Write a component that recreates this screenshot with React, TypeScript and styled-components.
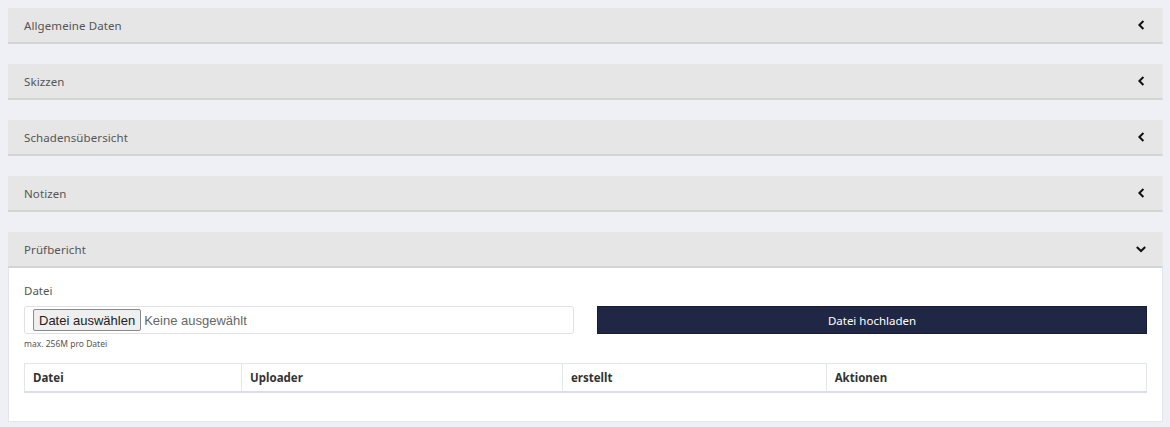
import React from 'react'
import styled, { createGlobalStyle } from 'styled-components'

const GlobalStyle = createGlobalStyle`
  html, body {
    margin: 0;
    padding: 0;
    background: #eff0f6;
    font-family: "Noto Sans", "Open Sans", sans-serif;
  }
`

const Page = styled.div`
  display: flex;
  flex-direction: column;
  gap: 20px;
  padding: 8px 7px 8px 8px;
`

const Panel = styled.section`
  display: flex;
  flex-direction: column;
`

const Header = styled.div`
  display: flex;
  align-items: center;
  justify-content: space-between;
  height: 34px;
  padding: 0 15px 0 16px;
  background: #e6e6e6;
  border-bottom: 2px solid #d4d4d4;
  border-right: 1px solid #e9e9ea;
  color: #555;
  font-size: 11.5px;
  letter-spacing: 0.1px;
`

const Body = styled.div`
  display: flex;
  flex-direction: column;
  padding: 15px 15px 28px 15px;
  background: #fff;
  border: 1px solid #e4e6ee;
  border-top: none;
`

const Label = styled.div`
  color: #555;
  font-size: 11.5px;
  margin-bottom: 8px;
`

const Row = styled.div`
  display: grid;
  grid-template-columns: 1fr 1fr;
  gap: 23px;
`

const FileBox = styled.div`
  display: flex;
  align-items: center;
  gap: 3px;
  height: 26px;
  padding: 0 8px;
  border: 1px solid #dfe1e8;
  border-radius: 3px;
  background: #fff;
  font-family: "Liberation Sans", Arial, sans-serif;
  font-size: 13px;
  color: #666;
`

const ChooseButton = styled.span`
  display: inline-flex;
  align-items: center;
  height: 20px;
  padding: 0 5px;
  background: #efefef;
  border: 1px solid #8a8a8a;
  border-radius: 2px;
  color: #222;
`

const UploadButton = styled.button`
  height: 28px;
  border: 1px solid #161d35;
  background: #1f2744;
  color: #fff;
  font-family: "Noto Sans", "Open Sans", sans-serif;
  font-size: 11.5px;
  cursor: pointer;
`

const Hint = styled.div`
  margin-top: 4px;
  color: #555;
  font-size: 8.5px;
`

const Table = styled.table`
  margin-top: 14px;
  width: 100%;
  border-collapse: collapse;
  table-layout: fixed;
  border: 1px solid #e3e5ec;
  border-bottom: 2px solid #dcdee6;
`

const Col = styled.col<{ pct: number }>`
  width: ${p => p.pct}%;
`

const Th = styled.th`
  height: 27px;
  padding: 0 8px;
  text-align: left;
  font-size: 11.5px;
  font-weight: 700;
  color: #333;
  border-right: 1px solid #e3e5ec;
`

const Chevron = ({ open }: { open?: boolean }) => (
  <svg width="12" height="12" viewBox="0 0 12 12">
    <path
      d={open ? 'M1.8 4 L6 8 L10.2 4' : 'M8.4 2 L4.4 6 L8.4 10'}
      fill="none"
      stroke="#111"
      strokeWidth="2"
    />
  </svg>
)

const closed = ['Allgemeine Daten', 'Skizzen', 'Schadensübersicht', 'Notizen']
const cols = [
  { label: 'Datei', pct: 19.35 },
  { label: 'Uploader', pct: 28.6 },
  { label: 'erstellt', pct: 23.5 },
  { label: 'Aktionen', pct: 28.55 },
]

export default function App() {
  return (
    <>
      <GlobalStyle />
      <Page>
        {closed.map(t => (
          <Panel key={t}>
            <Header>
              {t}
              <Chevron />
            </Header>
          </Panel>
        ))}
        <Panel>
          <Header>
            Prüfbericht
            <Chevron open />
          </Header>
          <Body>
            <Label>Datei</Label>
            <Row>
              <FileBox>
                <ChooseButton>Datei auswählen</ChooseButton>
                Keine ausgewählt
              </FileBox>
              <UploadButton>Datei hochladen</UploadButton>
            </Row>
            <Hint>max. 256M pro Datei</Hint>
            <Table>
              <colgroup>
                {cols.map(c => <Col key={c.label} pct={c.pct} />)}
              </colgroup>
              <thead>
                <tr>
                  {cols.map(c => <Th key={c.label}>{c.label}</Th>)}
                </tr>
              </thead>
            </Table>
          </Body>
        </Panel>
      </Page>
    </>
  )
}
